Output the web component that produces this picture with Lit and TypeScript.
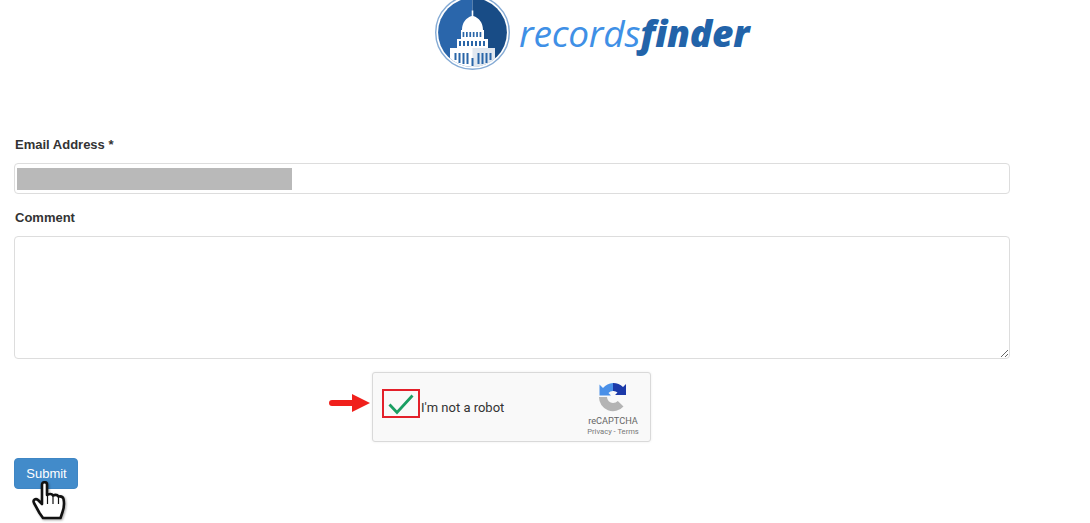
import { LitElement, html, css, svg } from "lit";
import { customElement } from "lit/decorators.js";

const upper = [27.6, 31, 34.4, 37.8, 41.2, 44.6].map(
  (x) => svg`<rect x=${x} y="32" width="1.7" height="5"/>`
);
const middle = [24, 28, 32, 36, 40, 44, 48].map(
  (x) => svg`<rect x=${x} y="41" width="2" height="5"/>`
);
const lower = [
  [19.5, 53, 7], [23.5, 53, 10], [27.5, 53, 11], [31.5, 53, 11], [36.5, 58, 8],
  [42.5, 53, 11], [46.5, 53, 11], [50.5, 53, 10], [54.5, 53, 7],
].map(([x, y, h]) => svg`<rect x=${x} y=${y} width="2" height=${h}/>`);

@customElement("app-root")
export class AppRoot extends LitElement {
  static styles = css`
    :host {
      display: block;
      width: 1090px;
      height: 523px;
      overflow: hidden;
      background: #fff;
      font-family: "Liberation Sans", Arial, sans-serif;
      color: #333;
    }
    .page { position: relative; height: 523px; padding: 0 14px; box-sizing: border-box; width: 1024px; }
    .brand { display: flex; align-items: flex-start; gap: 9px; margin-left: 421px; height: 71px; }
    .seal { display: block; flex: none; }
    .word {
      font-family: "Open Sans", sans-serif;
      font-style: italic;
      font-size: 37px;
      line-height: 40px;
      margin-top: 13px;
      color: #3f90e6;
      font-weight: 500;
      white-space: nowrap;
      letter-spacing: -0.2px;
    }
    .word b { color: #2263a9; font-weight: 800; letter-spacing: -0.2px; }
    form { display: flex; flex-direction: column; margin-top: 66px; }
    label { font-size: 13px; line-height: 15px; font-weight: 700; color: #333; padding-left: 1px; }
    .field {
      display: flex;
      align-items: center;
      height: 31px;
      margin-top: 11px;
      padding: 0 2px;
      box-sizing: border-box;
      border: 1px solid #ddd;
      border-radius: 4px;
    }
    .mask { width: 275px; height: 22px; background: #b9b9b9; }
    .comment-label { margin-top: 16px; }
    textarea {
      display: block;
      box-sizing: border-box;
      width: 996px;
      height: 123px;
      margin-top: 11px;
      border: 1px solid #ddd;
      border-radius: 4px;
      outline: none;
    }
    .captcha-row { display: flex; justify-content: center; margin-top: 13px; padding-right: 1px; }
    .captcha {
      display: flex;
      align-items: center;
      box-sizing: border-box;
      width: 279px;
      height: 70px;
      padding-left: 9px;
      background: #f9f9f9;
      border: 1px solid #d9d9d9;
      border-radius: 3px;
      box-shadow: 0 0 3px rgba(0, 0, 0, 0.07);
    }
    .tick {
      display: flex;
      align-items: center;
      justify-content: center;
      box-sizing: border-box;
      width: 38px;
      height: 29px;
      border: 2px solid #e3202a;
      margin-top: -7px;
    }
    .robot { font-family: Roboto, sans-serif; font-size: 13px; color: #333; margin-left: 1px; margin-top: 1px; }
    .badge {
      display: flex;
      flex-direction: column;
      align-items: center;
      margin-left: auto;
      width: 60px;
      margin-right: 7px;
      margin-top: 2px;
      font-family: Roboto, sans-serif;
      color: #666;
    }
    .badge svg { display: block; margin-top: 2px; }
    .name { font-size: 9.2px; line-height: 12px; margin-top: 3px; color: #666; white-space: nowrap; }
    .links { font-size: 7.6px; line-height: 10px; color: #777; white-space: nowrap; }
    .arrow { position: absolute; left: 329px; top: 394px; }
    .actions { margin-top: 16px; }
    button {
      display: block;
      width: 64px;
      height: 31px;
      padding: 0 0 0 1px;
      background: #428bca;
      color: #fff;
      border: 1px solid #3f86c4;
      border-radius: 4px;
      font: 13px "Liberation Sans", Arial, sans-serif;
    }
    .hand {
      position: absolute;
      left: 32px;
      top: 481px;
      filter: drop-shadow(1px 1px 1px rgba(0, 0, 0, 0.35));
    }
  `;

  render() {
    return html`
      <div class="page">
        <div class="brand">
          <svg class="seal" width="75" height="71" viewBox="0 0 75 71">
            <defs><clipPath id="disc"><circle cx="37.5" cy="32.5" r="34.4"/></clipPath></defs>
            <circle cx="37.5" cy="32.5" r="36.8" fill="#fff" stroke="#85abd5" stroke-width="1.4"/>
            <g clip-path="url(#disc)">
              <rect x="0" y="-4" width="37.5" height="75" fill="#2a66ab"/>
              <rect x="37.5" y="-4" width="37.5" height="75" fill="#184c86"/>
              <path d="M36.700 10.500h1.600V16c5.700 2 9.700 6.500 9.700 14H49v9h4v9h7v24H15V48h7v-9h4v-9h1c0-7.500 4-12 9.700-14z" fill="#fff"/>
              <path d="M37.500 48H60v24H37.500z" fill="#e1e8f0"/>
              <g fill="#2a66a8">${upper}${middle}${lower}</g>
            </g>
          </svg>
          <div class="word">records<b>finder</b></div>
        </div>
        <form>
          <label>Email Address *</label>
          <div class="field"><div class="mask"></div></div>
          <label class="comment-label">Comment</label>
          <textarea></textarea>
          <div class="captcha-row">
            <div class="captcha">
              <div class="tick">
                <svg width="28" height="22" viewBox="0 0 28 22"><path d="M2.500 11.500l7.500 8L25.500 2.500" fill="none" stroke="#1a9e62" stroke-width="2.800"/></svg>
              </div>
              <span class="robot">I'm not a robot</span>
              <div class="badge">
                <svg width="30" height="30" viewBox="0 0 30 30">
                  <path d="M15 1V9A6 6 0 0 0 10.500 11L13 13.500H1.500V2.500L5 6A14 14 0 0 1 15 1z" fill="#4a90e8"/>
                  <path d="M15 1A14 14 0 0 1 25 5L28 2V13H17L19.500 10.500A6 6 0 0 0 15 9z" fill="#1c3aa9"/>
                  <path d="M1 15H9A6 6 0 0 0 15 21C17 21 18.500 20.300 19.800 19L25.500 24.500A14 14 0 0 1 1 15z" fill="#b4b4b4"/>
                </svg>
                <span class="name">reCAPTCHA</span>
                <span class="links">Privacy - Terms</span>
              </div>
            </div>
          </div>
          <div class="actions"><button type="button">Submit</button></div>
        </form>
        <svg class="arrow" width="42" height="18" viewBox="0 0 42 18"><path d="M3 6h20V0l18 9-18 9v-6H3a3 3 0 0 1 0-6z" fill="#f0201c"/></svg>
        <svg class="hand" width="38" height="41" viewBox="0 0 38 41">
          <path d="M10 3.500c0-3 5-3 5 0V14c3-1.500 5-1 6 .5 2.500-1 4.500-.5 5.500 1 2.500-.5 4.500 .5 5 2.500.8 4 .5 9-1 13l-2 6H11l-3.500-5L2 22c-1.500-3 1.500-5 4-3l4 4z" fill="#fff" stroke="#111" stroke-width="2.600" stroke-linejoin="round"/>
          <path d="M15.500 15v8M21 15v8M26.500 16v7" stroke="#111" stroke-width="1.200" fill="none"/>
        </svg>
      </div>
    `;
  }
}
